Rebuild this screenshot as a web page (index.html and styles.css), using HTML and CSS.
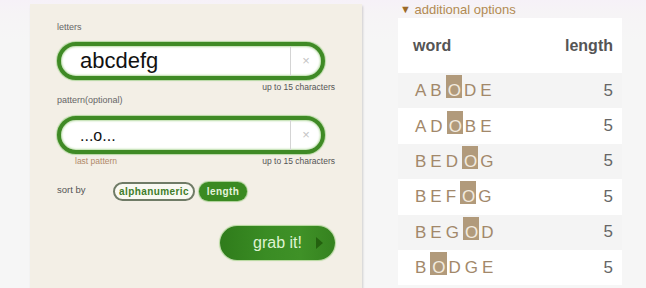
FILE: index.html
```html
<!DOCTYPE html>
<html>
<head>
<meta charset="utf-8">
<link rel="stylesheet" href="styles.css">
</head>
<body>
<div class="page">
  <div class="card">
    <div class="label">letters</div>
    <div class="field">
      <div class="field-text big">abcdefg</div>
      <div class="clear">×</div>
    </div>
    <div class="hint-row"><span></span><span class="hint">up to 15 characters</span></div>
    <div class="label label2">pattern(optional)</div>
    <div class="field field2">
      <div class="field-text mid">...o...</div>
      <div class="clear">×</div>
    </div>
    <div class="hint-row"><span class="last">last pattern</span><span class="hint">up to 15 characters</span></div>
    <div class="sort-row">
      <span class="sort-label">sort by</span>
      <span class="pill pill-outline">alphanumeric</span>
      <span class="pill pill-fill">length</span>
    </div>
    <div class="btn-row">
      <div class="grab">grab it!<span class="tri"></span></div>
    </div>
  </div>
  <div class="side">
    <div class="opts"><span class="arrow">▼</span> additional options</div>
    <div class="table">
      <div class="row head"><span class="w">word</span><span class="n">length</span></div>
      <div class="row gray"><span class="word">AB<b>O</b>DE</span><span class="num">5</span></div>
      <div class="row"><span class="word">AD<b>O</b>BE</span><span class="num">5</span></div>
      <div class="row gray"><span class="word">BED<b>O</b>G</span><span class="num">5</span></div>
      <div class="row"><span class="word">BEF<b>O</b>G</span><span class="num">5</span></div>
      <div class="row gray"><span class="word">BEG<b>O</b>D</span><span class="num">5</span></div>
      <div class="row"><span class="word">B<b>O</b>DGE</span><span class="num">5</span></div>
    </div>
  </div>
</div>
</body>
</html>
```

FILE: styles.css
```css
html, body {
  margin: 0;
  padding: 0;
}
body {
  width: 646px;
  height: 288px;
  overflow: hidden;
  background: linear-gradient(#f6f1f8 0, #f6f4f6 14px, #f6f6f6 40px);
  font-family: "Liberation Sans", Arial, sans-serif;
}
.page {
  display: flex;
  align-items: flex-start;
}
.card {
  margin-left: 30px;
  margin-top: 4px;
  width: 278px;
  height: 275px;
  padding: 18px 27px 0;
  box-sizing: content-box;
  background: #f3efe6;
  box-shadow: 1px 2px 2px rgba(0,0,0,0.16);
}
.label {
  font-size: 9px;
  line-height: 11px;
  color: #666;
}
.label2 {
  margin-top: 3px;
}
.field {
  margin-top: 9px;
  width: 260px;
  height: 30px;
  border: 4px solid #3f8a25;
  border-radius: 20px;
  background: #fff;
  box-shadow: 0 0 1px 1px #b5d8a2, inset 0 0 2px 1px #b9dca6;
  display: flex;
  align-items: center;
  overflow: hidden;
}
.field2 {
  margin-top: 10px;
}
.field-text {
  flex: 1;
  padding-left: 19px;
  color: #111;
}
.big {
  font-size: 22px;
}
.mid {
  font-size: 16px;
  padding-top: 2px;
}
.clear {
  width: 30px;
  height: 30px;
  border-left: 1px solid #d4d4d4;
  color: #c4c4c4;
  font-size: 13px;
  line-height: 30px;
  text-align: center;
}
.hint-row {
  margin-top: 2px;
  display: flex;
  justify-content: space-between;
  font-size: 8.5px;
  line-height: 10px;
  color: #555;
}
.last {
  color: #b1896a;
  padding-left: 18px;
}
.sort-row {
  margin-top: 16px;
  display: flex;
  align-items: center;
  height: 19px;
}
.sort-label {
  font-size: 9.5px;
  color: #555;
  width: 56px;
  margin-top: -4px;
}
.pill {
  height: 19px;
  box-sizing: border-box;
  border-radius: 10px;
  font-size: 10px;
  font-weight: bold;
  letter-spacing: 0.4px;
  display: flex;
  align-items: center;
  justify-content: center;
}
.pill-outline {
  width: 82px;
  border: 2px solid #6f7b66;
  background: #f9f9f2;
  color: #3f7d2a;
}
.pill-fill {
  width: 48px;
  margin-left: 4px;
  background: #3a8a22;
  color: #e6f4dc;
  box-shadow: 0 0 1px 1px #a9cf94;
}
.btn-row {
  margin-top: 25px;
  display: flex;
  justify-content: flex-end;
}
.grab {
  width: 115px;
  height: 34px;
  box-sizing: border-box;
  border-radius: 17px;
  background: linear-gradient(90deg, #2f7c1b 0%, #3a8c24 40%, #3f9127 70%, #35821f 100%);
  box-shadow: 0 0 1px 1px #b4d89c;
  color: #dff3d2;
  font-size: 16px;
  display: flex;
  align-items: center;
  justify-content: flex-end;
  padding-right: 12px;
}
.tri {
  width: 0;
  height: 0;
  margin-left: 14px;
  border-left: 7px solid #24610f;
  border-top: 6px solid transparent;
  border-bottom: 6px solid transparent;
}
.side {
  margin-left: 36px;
  width: 224px;
}
.opts {
  margin-top: 1px;
  padding-left: 2px;
  font-size: 13px;
  line-height: 16px;
  color: #b28a52;
}
.arrow {
  font-size: 11px;
  color: #9c6a28;
  vertical-align: 1px;
}
.table {
  display: flex;
  flex-direction: column;
}
.row {
  display: flex;
  justify-content: space-between;
  align-items: center;
  height: 35.4px;
  padding: 0 9px 0 17px;
  background: #fff;
}
.row.gray {
  background: #f4f4f4;
}
.row.head {
  height: 55px;
  padding-left: 15px;
  padding-top: 0;
  box-sizing: border-box;
  font-size: 16px;
  font-weight: bold;
  color: #555;
}
.word {
  font-size: 17px;
  letter-spacing: 4px;
  color: #a2886a;
  white-space: pre;
  padding-bottom: 5px;
}
.word b {
  font-weight: normal;
  display: inline-block;
  background: #b19a7b;
  color: #f2eadf;
  line-height: 14px;
  padding: 9px 1px 0 2px;
  letter-spacing: 0;
  margin-right: 2px;
}
.num {
  font-size: 17px;
  color: #666;
  padding-top: 0;
}
```
